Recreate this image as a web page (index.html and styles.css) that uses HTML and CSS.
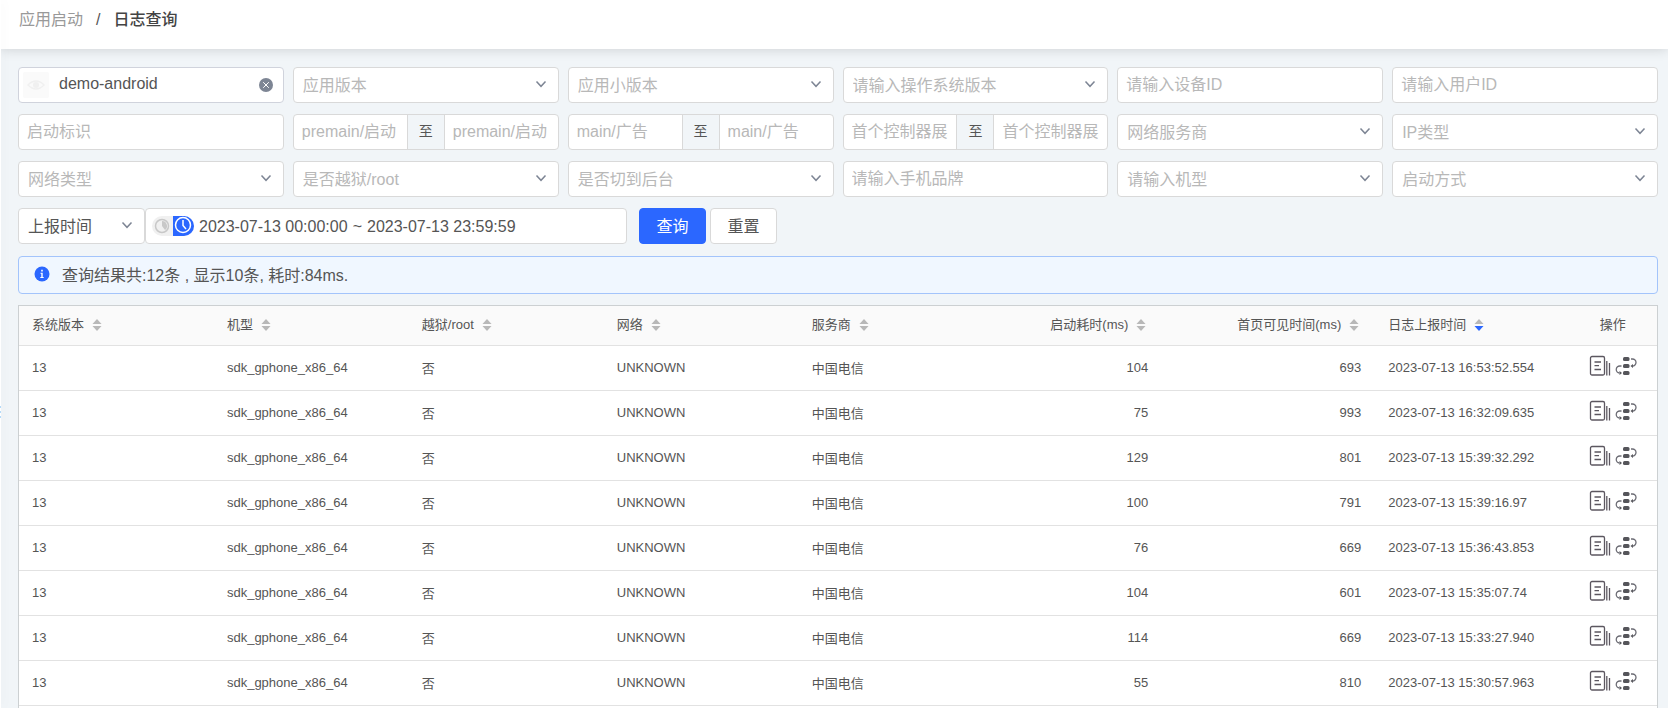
FILE: index.html
```html
<!DOCTYPE html>
<html lang="zh-CN">
<head>
    <meta charset="UTF-8">
    <title>日志查询</title>
    <link rel="stylesheet" href="styles.css">
</head>
<body>
    <!-- shared icons -->
    <svg class="sprite" aria-hidden="true">
        <symbol id="arrow" viewBox="0 0 12 12"><path d="M1.500 3.500L6 8.300l4.500-4.800" fill="none" stroke="#7d8594" stroke-width="1.500"/></symbol>
        <symbol id="sort" viewBox="0 0 10 12"><path d="M5 0l4.500 5h-9z"/><path class="down" d="M5 12l4.500-5h-9z"/></symbol>
        <symbol id="log" viewBox="0 0 22 22">
            <g fill="none" stroke="#5c5760" stroke-width="1.300">
                <rect x="1.500" y="1.500" width="14" height="18.500" rx="1.500"/>
                <path d="M5.500 7h6.500M5.500 10.700h4.500M5.500 14.500h6.500M17.800 6v14.500M20.500 8v12.500"/>
            </g>
        </symbol>
        <symbol id="flow" viewBox="0 0 22 22">
            <g fill="#55555a">
                <rect x="8" y="2" width="6.500" height="4" rx="1.500"/>
                <rect x="8" y="9" width="6.500" height="4" rx="1.500"/>
                <rect x="8" y="16" width="6.500" height="4" rx="1.500"/>
                <path d="M15.500 11l2.500-2v4zM7 18l-2.500-2v4z"/>
            </g>
            <path d="M16 4h1.500a3.500 3.500 0 0 1 0 7M6.500 11H5a3.500 3.500 0 0 0-.5 7" fill="none" stroke="#6c6c74" stroke-width="1.300"/>
        </symbol>
    </svg>

    <div class="side-edge"><i></i><i></i><i></i></div>
    <div class="page">
        <nav class="breadcrumb">
            <a href="#">应用启动</a>
            <span>/</span>
            <strong>日志查询</strong>
        </nav>

        <main class="content">
            <form class="search" onsubmit="return false">
                <div class="filters">
                    <div class="field app">
                        <svg class="thumb" viewBox="0 0 26 26"><rect width="26" height="26" rx="2" fill="#fafafa"/><path d="M5 13q8-8 16 0q-8 8-16 0z" fill="none" stroke="#f0f0f0" stroke-width="1.500"/><circle cx="13" cy="13" r="3" fill="#f0f0f0"/></svg>
                        <input type="text" value="demo-android" aria-label="应用">
                        <button type="button" class="clear" aria-label="清除"><svg viewBox="0 0 14 14"><circle cx="7" cy="7" r="7" fill="#7d8594"/><path d="M4.200 4.200l5.600 5.600M9.800 4.200l-5.600 5.600" stroke="#fff"/></svg></button>
                    </div>
                    <div class="field select"><select aria-label="应用版本"><option>应用版本</option></select><svg><use href="#arrow"/></svg></div>
                    <div class="field select"><select aria-label="应用小版本"><option>应用小版本</option></select><svg><use href="#arrow"/></svg></div>
                    <div class="field select"><select aria-label="操作系统版本"><option>请输入操作系统版本</option></select><svg><use href="#arrow"/></svg></div>
                    <div class="field"><input type="text" placeholder="请输入设备ID" aria-label="设备ID"></div>
                    <div class="field"><input type="text" placeholder="请输入用户ID" aria-label="用户ID"></div>

                    <div class="field"><input type="text" placeholder="启动标识" aria-label="启动标识"></div>
                    <div class="field range"><input type="text" placeholder="premain/启动" aria-label="premain 最小"><span>至</span><input type="text" placeholder="premain/启动" aria-label="premain 最大"></div>
                    <div class="field range"><input type="text" placeholder="main/广告" aria-label="main 最小"><span>至</span><input type="text" placeholder="main/广告" aria-label="main 最大"></div>
                    <div class="field range"><input type="text" placeholder="首个控制器展现" aria-label="控制器 最小"><span>至</span><input type="text" placeholder="首个控制器展现" aria-label="控制器 最大"></div>
                    <div class="field select"><select aria-label="网络服务商"><option>网络服务商</option></select><svg><use href="#arrow"/></svg></div>
                    <div class="field select"><select aria-label="IP类型"><option>IP类型</option></select><svg><use href="#arrow"/></svg></div>

                    <div class="field select"><select aria-label="网络类型"><option>网络类型</option></select><svg><use href="#arrow"/></svg></div>
                    <div class="field select"><select aria-label="是否越狱/root"><option>是否越狱/root</option></select><svg><use href="#arrow"/></svg></div>
                    <div class="field select"><select aria-label="是否切到后台"><option>是否切到后台</option></select><svg><use href="#arrow"/></svg></div>
                    <div class="field"><input type="text" placeholder="请输入手机品牌" aria-label="手机品牌"></div>
                    <div class="field select"><select aria-label="机型"><option>请输入机型</option></select><svg><use href="#arrow"/></svg></div>
                    <div class="field select"><select aria-label="启动方式"><option>启动方式</option></select><svg><use href="#arrow"/></svg></div>
                </div>

                <div class="time-row">
                    <div class="field select time-type"><select aria-label="时间类型"><option>上报时间</option></select><svg><use href="#arrow"/></svg></div>
                    <div class="field dates">
                        <div class="mode">
                            <button type="button" aria-label="相对时间"><svg viewBox="0 0 20 20"><circle cx="10" cy="10" r="6.500" fill="none" stroke="#c8c8c8" stroke-width="1.500"/><path d="M10 5a5 5 0 0 1 3 9l-3-4z" fill="#c8c8c8"/></svg></button>
                            <button type="button" class="on" aria-label="绝对时间"><svg viewBox="0 0 20 20"><circle cx="10" cy="9" r="7.500" fill="none" stroke="#fff" stroke-width="1.500"/><path d="M10 4v5.500l3 3.500" fill="none" stroke="#fff" stroke-width="1.500"/></svg></button>
                        </div>
                        <input type="text" value="2023-07-13 00:00:00" aria-label="开始时间">
                        <span>~</span>
                        <input type="text" value="2023-07-13 23:59:59" aria-label="结束时间">
                    </div>
                    <div class="actions">
                        <button type="submit" class="btn primary">查询</button>
                        <button type="reset" class="btn">重置</button>
                    </div>
                </div>
            </form>

            <div class="notice">
                <svg viewBox="0 0 16 16"><circle cx="8" cy="8" r="7.500" fill="#2b67ff"/><path d="M7.200 3.800h1.600v1.600H7.200zM6.500 6.800h2.200v4.200h1v1H6.300v-1h1V7.800h-.8z" fill="#fff"/></svg>
                <span>查询结果共:12条 , 显示10条, 耗时:84ms.</span>
            </div>

            <div class="table-box">
                <table>
                    <colgroup>
                        <col class="c-text"><col class="c-text"><col class="c-text"><col class="c-text"><col class="c-text">
                        <col class="c-cost"><col class="c-visible"><col class="c-time"><col class="c-ops">
                    </colgroup>
                    <thead>
                        <tr>
                            <th>系统版本<svg class="sort"><use href="#sort"/></svg></th>
                            <th>机型<svg class="sort"><use href="#sort"/></svg></th>
                            <th>越狱/root<svg class="sort"><use href="#sort"/></svg></th>
                            <th>网络<svg class="sort"><use href="#sort"/></svg></th>
                            <th>服务商<svg class="sort"><use href="#sort"/></svg></th>
                            <th class="num">启动耗时(ms)<svg class="sort"><use href="#sort"/></svg></th>
                            <th class="num">首页可见时间(ms)<svg class="sort"><use href="#sort"/></svg></th>
                            <th>日志上报时间<svg class="sort desc"><use href="#sort"/></svg></th>
                            <th class="ops">操作</th>
                        </tr>
                    </thead>
                    <tbody id="rows"></tbody>
                </table>
            </div>
        </main>
    </div>

    <script src="script.js"></script>
</body>
</html>
```

FILE: styles.css
```css
* {
    box-sizing: border-box;
}
body {
    margin: 0;
    background: #f1f5f8;
    color: #555;
    font-family: "Liberation Sans", "Noto Sans CJK SC", sans-serif;
    font-size: 16px;
}
input, select, button {
    font: inherit;
    color: inherit;
    margin: 0;
    outline: none;
}
.sprite {
    display: none;
}
/* edge of the collapsed side menu with its drag handle */
.side-edge {
    display: flex;
    flex-direction: column;
    justify-content: center;
    gap: 3px;
    position: fixed;
    top: 0;
    bottom: 0;
    left: 0;
    width: 1px;
    padding-top: 116px;
    background: #fff;
    box-shadow: 0 0 12px rgba(0, 0, 0, 0.15);
    z-index: 2;
}
.side-edge i {
    height: 2px;
    background: #b5daf8;
}
.page {
    display: flex;
    flex-direction: column;
    height: 100vh;
    overflow: hidden;
}
.breadcrumb {
    display: flex;
    flex: none;
    height: 49px;
    padding: 8px 19px;
    line-height: 24px;
    background: #fff;
    box-shadow: 0 0 12px rgba(0, 0, 0, 0.16);
}
.breadcrumb a {
    color: #999;
    text-decoration: none;
}
.breadcrumb span {
    margin: 0 13px;
}
.breadcrumb strong {
    font-weight: 500;
    color: #444;
}
.content {
    display: flex;
    flex-direction: column;
    flex: 1;
    min-height: 0;
    padding: 18px 10px 0 18px;
}

/* search form */
.search {
    display: flex;
    flex-direction: column;
    gap: 11px;
}
.filters {
    display: grid;
    grid-template-columns: repeat(6, minmax(0, 1fr));
    gap: 11px 9px;
}
.field {
    display: flex;
    align-items: center;
    position: relative;
    height: 36px;
    background: #fff;
    border: 1px solid #d9d9d9;
    border-radius: 4px;
}
.field input {
    flex: 1;
    min-width: 0;
    height: 34px;
    padding: 0 8px;
    border: 0;
    background: none;
}
.field input::placeholder {
    color: #b8b8b8;
    opacity: 1;
}
.field select {
    width: 100%;
    height: 34px;
    padding: 0 30px 0 9px;
    border: 0;
    background: none;
    appearance: none;
    color: #b8b8b8;
}
.select svg {
    position: absolute;
    right: 11px;
    top: 10px;
    width: 12px;
    height: 12px;
    pointer-events: none;
}
.app {
    padding: 0 10px 0 4px;
    border-color: #d0d3dc;
}
.thumb {
    width: 26px;
    height: 26px;
}
.field.app input {
    padding: 0 0 2px 10px;
}
.clear {
    display: flex;
    padding: 0;
    border: 0;
    background: none;
}
.clear svg {
    width: 14px;
    height: 14px;
}
.range span {
    width: 38px;
    height: 34px;
    line-height: 32px;
    text-align: center;
    font-size: 14px;
    background: #f1f5f8;
    border: solid #d9d9d9;
    border-width: 0 1px;
}
.time-row {
    display: flex;
}
.time-type {
    width: 127px;
}
.field.time-type select {
    color: #555;
}
.dates {
    width: 482px;
    padding-left: 6px;
}
.field.dates input {
    flex: none;
    width: 154px;
    padding: 2px 0 0 5px;
}
.dates span {
    width: 14px;
    padding-top: 2px;
    text-align: right;
}
.mode {
    display: flex;
    height: 20px;
    border-radius: 10px;
    overflow: hidden;
    background: #f0f0f0;
}
.mode button {
    width: 21px;
    height: 20px;
    padding: 0;
    border: 0;
    background: none;
}
.mode .on {
    background: #2b67ff;
}
.mode svg {
    display: block;
    width: 20px;
    height: 20px;
}
.actions {
    display: flex;
    gap: 4px;
    margin-left: 12px;
}
.btn {
    width: 67px;
    height: 36px;
    padding: 0 0 2px;
    border: 1px solid #d9d9d9;
    border-radius: 4px;
    background: #fff;
    cursor: pointer;
}
.btn.primary {
    border-color: #2b67ff;
    background: #2b67ff;
    color: #fff;
}

/* result */
.notice {
    display: flex;
    align-items: center;
    flex: none;
    gap: 12px;
    height: 38px;
    margin: 12px 0 11px;
    padding: 0 15px 3px;
    background: #f0f7ff;
    border: 1px solid #a3c4fb;
    border-radius: 4px;
}
.notice svg {
    width: 16px;
    height: 16px;
}
.table-box {
    flex: 1;
    min-height: 0;
    overflow: hidden;
    background: #fff;
    border: 1px solid #ccd0d2;
    border-bottom: 0;
}
table {
    width: 100%;
    table-layout: fixed;
    border-collapse: collapse;
    font-size: 13px;
}
.c-text {
    width: 11.9%;
}
.c-cost {
    width: 10.3%;
}
.c-visible {
    width: 13%;
}
.c-time {
    width: 11.8%;
}
.c-ops {
    width: 5.4%;
}
th, td {
    padding: 0 14px 0 13px;
    text-align: left;
    white-space: nowrap;
    border-bottom: 1px solid #e2e2e2;
}
th {
    height: 39px;
    padding-bottom: 3px;
    font-weight: normal;
    background: #fafafa;
}
td {
    height: 45px;
}
.num {
    text-align: right;
}
th.ops {
    padding: 0 0 3px;
    text-align: center;
}
td.ops {
    padding: 0 0 3px;
    text-align: center;
}
.sort {
    width: 10px;
    height: 12px;
    margin-left: 8px;
    vertical-align: -2px;
    fill: #b8b8b8;
    --down: #b8b8b8;
}
.down {
    fill: var(--down);
}
.num .sort {
    margin-right: 2px;
}
.desc {
    --down: #2b67ff;
}
.icon-btn {
    padding: 0;
    border: 0;
    background: none;
    vertical-align: middle;
    cursor: pointer;
}
.icon-btn + .icon-btn {
    margin-left: 4px;
}
.icon-btn svg {
    display: block;
    width: 22px;
    height: 22px;
}
```

FILE: script.js
```js
const rows = [
    [104, 693, '2023-07-13 16:53:52.554'],
    [75, 993, '2023-07-13 16:32:09.635'],
    [129, 801, '2023-07-13 15:39:32.292'],
    [100, 791, '2023-07-13 15:39:16.97'],
    [76, 669, '2023-07-13 15:36:43.853'],
    [104, 601, '2023-07-13 15:35:07.74'],
    [114, 669, '2023-07-13 15:33:27.940'],
    [55, 810, '2023-07-13 15:30:57.963']
];

document.getElementById('rows').innerHTML = rows.map(([cost, visible, time]) => `
    <tr>
        <td>13</td>
        <td>sdk_gphone_x86_64</td>
        <td>否</td>
        <td>UNKNOWN</td>
        <td>中国电信</td>
        <td class="num">${cost}</td>
        <td class="num">${visible}</td>
        <td>${time}</td>
        <td class="ops">
            <button class="icon-btn" aria-label="日志"><svg><use href="#log"/></svg></button><button class="icon-btn" aria-label="流程"><svg><use href="#flow"/></svg></button>
        </td>
    </tr>`).join('');
```
